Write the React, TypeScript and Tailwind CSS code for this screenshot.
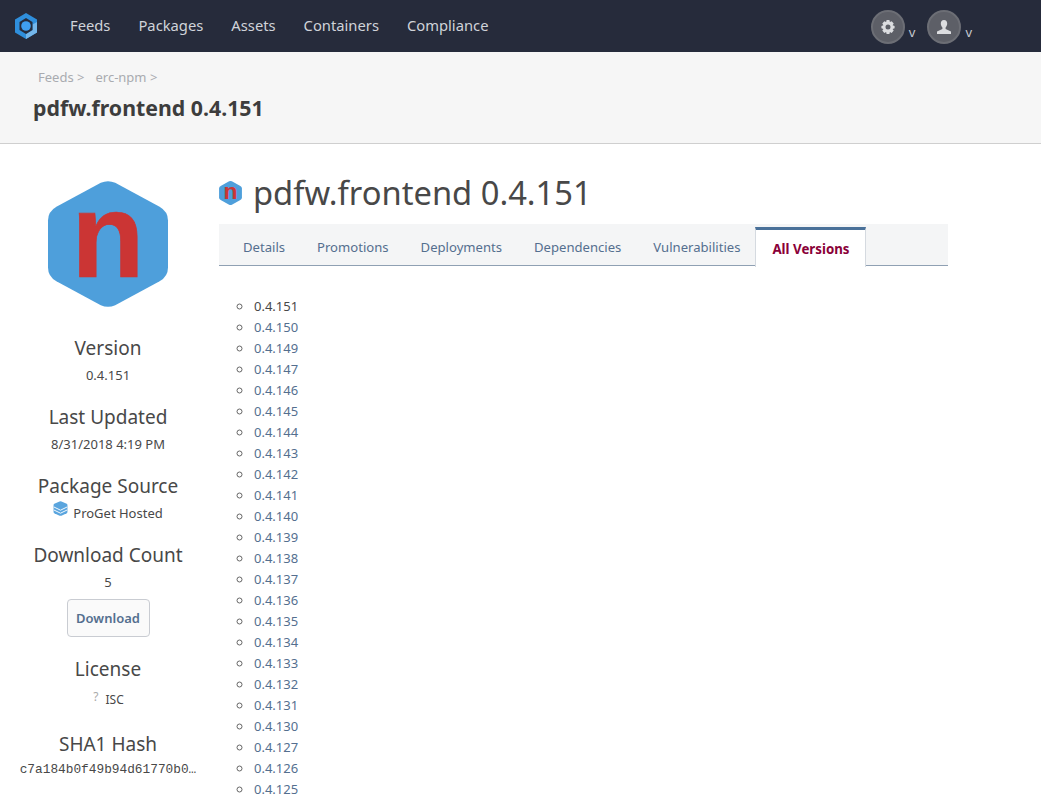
const navItems = ['Feeds', 'Packages', 'Assets', 'Containers', 'Compliance'];
const tabs = ['Details', 'Promotions', 'Deployments', 'Dependencies', 'Vulnerabilities'];
const versions = [
  '0.4.150', '0.4.149', '0.4.147', '0.4.146', '0.4.145', '0.4.144', '0.4.143', '0.4.142',
  '0.4.141', '0.4.140', '0.4.139', '0.4.138', '0.4.137', '0.4.136', '0.4.135', '0.4.134',
  '0.4.133', '0.4.132', '0.4.131', '0.4.130', '0.4.127', '0.4.126', '0.4.125',
];

function NpmHex({ className }: { className: string }) {
  return (
    <svg viewBox="0 0 100 105" className={`overflow-visible ${className}`}>
      <path d="M44 1.5 Q50 -1 56 1.5 L93 21.5 Q100 25.5 100 33 L100 72 Q100 79.5 93 83.5 L56 103.5 Q50 106 44 103.5 L7 83.5 Q0 79.5 0 72 L0 33 Q0 25.5 7 21.5 Z" fill="#4e9fdb" />
      <text x="50" y="80" textAnchor="middle" fontSize="100" fontWeight="700" fill="#cb3534" stroke="#cb3534" strokeWidth="0.6" fontFamily="'Liberation Sans', sans-serif">
        n
      </text>
    </svg>
  );
}

function AppLogo() {
  return (
    <svg viewBox="0 0 24 26" className="w-[24px] h-[26px]">
      <path d="M12 0 L23 6.5 V19.5 L12 26 L1 19.5 V6.5 Z" fill="#2f8fdc" />
      <path d="M23 9 V19.5 L12 26 V21 L18.5 17 V11.5 Z" fill="#74b6ea" />
      <path d="M12 5 L18.5 9 V17 L12 21 L5.5 17 V9 Z" fill="#262b3b" />
      <circle cx="12" cy="13" r="4.8" fill="#3f9ff0" />
    </svg>
  );
}

function GearIcon() {
  return (
    <svg viewBox="0 0 16 16" className="w-[16px] h-[16px]">
      <path
        fillRule="evenodd"
        d="M6.6 1 H9.4 L9.9 3 L11.7 2.2 L13.7 4.6 L12.6 6.2 L14.6 7 V9.2 L12.6 9.9 L13.7 11.6 L11.7 14 L9.9 13.1 L9.4 15 H6.6 L6.1 13.1 L4.3 14 L2.3 11.6 L3.4 9.9 L1.4 9.2 V7 L3.4 6.2 L2.3 4.6 L4.3 2.2 L6.1 3 Z M8 5.6 A2.5 2.5 0 1 0 8 10.6 A2.5 2.5 0 1 0 8 5.6 Z"
        fill="#dcdde0"
      />
    </svg>
  );
}

function UserIcon() {
  return (
    <svg viewBox="0 0 16 16" className="w-[16px] h-[16px]">
      <path d="M8 1 C10.2 1 11.2 2.6 11.2 4.6 C11.2 6.2 10.4 7.8 9.6 8.6 V10 L15 12.4 V15 H1 V12.4 L6.4 10 V8.6 C5.6 7.8 4.8 6.2 4.8 4.6 C4.8 2.6 5.8 1 8 1 Z" fill="#dcdde0" />
    </svg>
  );
}

function StackIcon() {
  return (
    <svg viewBox="0 0 16 16" className="w-[15px] h-[15px]">
      <path d="M7 0.4 Q8 0 9 0.4 L14.6 3 Q15.4 3.4 15.4 4.2 V11.8 Q15.4 12.6 14.6 13 L9 15.6 Q8 16 7 15.6 L1.4 13 Q0.6 12.6 0.6 11.8 V4.2 Q0.6 3.4 1.4 3 Z" fill="#5aa5de" />
      <path d="M1 6.4 L8 9.8 L15 6.4 M1 9.6 L8 13 L15 9.6" fill="none" stroke="#ffffff" strokeWidth="1" />
    </svg>
  );
}

function CircleButton({ children }: { children: React.ReactNode }) {
  return (
    <div className="flex items-end">
      <div className="w-[34px] h-[34px] rounded-full bg-[#5d5f67] border-2 border-[#6c6e75] flex items-center justify-center">
        {children}
      </div>
      <span className="ml-[4px] mb-[5px] text-[13px] leading-[14px] text-[#c5c8cf]">v</span>
    </div>
  );
}

function SideTitle({ children }: { children: React.ReactNode }) {
  return <div className="text-[19px] leading-[28px] text-[#484848] whitespace-nowrap">{children}</div>;
}

export default function App() {
  return (
    <div className="h-[798px] overflow-hidden bg-white text-[14px] text-[#484848] font-['Noto_Sans','Open_Sans',sans-serif]">
      <header className="h-[52px] bg-[#262b3b] flex items-center">
        <div className="ml-[14px] mr-[32px]">
          <AppLogo />
        </div>
        <nav className="flex gap-[28px] pb-[2px] text-[14.75px] text-[#d0d3d9]">
          {navItems.map((item) => (
            <span key={item}>{item}</span>
          ))}
        </nav>
        <div className="ml-auto mr-[69px] flex gap-[12px] pt-[2px]">
          <CircleButton>
            <GearIcon />
          </CircleButton>
          <CircleButton>
            <UserIcon />
          </CircleButton>
        </div>
      </header>

      <div className="h-[92px] bg-[#f6f6f6] border-b border-[#cfcfcf] pl-[33px] pt-[15px]">
        <div className="flex pl-[5px] text-[13px] leading-[20px] text-[#a9abb0]">
          <span className="mr-[11px]">Feeds &gt;</span>
          <span>erc-npm &gt;</span>
        </div>
        <div className="mt-[6px] text-[21.3px] leading-[30px] font-bold text-[#3d3d3d]">pdfw.frontend 0.4.151</div>
      </div>

      <div className="flex">
        <aside className="w-[219px] shrink-0 flex flex-col items-center pr-[3px] pt-[37px]">
          <NpmHex className="w-[120px] h-[126px]" />
          <div className="mt-[27px]">
            <SideTitle>Version</SideTitle>
          </div>
          <div className="mt-[3px] text-[13px] leading-[20px]">0.4.151</div>
          <div className="mt-[18px]">
            <SideTitle>Last Updated</SideTitle>
          </div>
          <div className="mt-[3px] text-[13px] leading-[20px]">8/31/2018 4:19 PM</div>
          <div className="mt-[18px]">
            <SideTitle>Package Source</SideTitle>
          </div>
          <div className="mt-[3px] flex items-start text-[13px] leading-[20px]">
            <span className="mr-[5px] mt-[-2px]">
              <StackIcon />
            </span>
            ProGet Hosted
          </div>
          <div className="mt-[18px]">
            <SideTitle>Download Count</SideTitle>
          </div>
          <div className="mt-[3px] text-[13px] leading-[20px]">5</div>
          <button className="mt-[7px] w-[83px] h-[38px] rounded-[4px] border border-[#c9ccd2] bg-[#fafafa] pt-[1px] text-[13px] font-semibold text-[#546f8f]">
            Download
          </button>
          <div className="mt-[18px]">
            <SideTitle>License</SideTitle>
          </div>
          <div className="mt-[7px] flex text-[12px] leading-[20px]">
            <span className="ml-[1px] mr-[7px] mt-[-3px] text-[#aaaaaa]">?</span>
            ISC
          </div>
          <div className="mt-[20px]">
            <SideTitle>SHA1 Hash</SideTitle>
          </div>
          <div className="mt-[2px] whitespace-nowrap font-['Liberation_Mono',monospace] text-[12.8px] leading-[20px]">
            c7a184b0f49b94d61770b0…
          </div>
        </aside>

        <main className="w-[729px] pt-[26px]">
          <div className="flex items-center h-[46px]">
            <NpmHex className="w-[23px] h-[24px]" />
            <h1 className="ml-[11px] text-[32.7px] leading-[46px] text-[#484848]">pdfw.frontend 0.4.151</h1>
          </div>
          <div className="mt-[8px] h-[42px] bg-[#f4f5f6] border-b border-[#8fa0b3] flex items-stretch pl-[8px] text-[13.1px] text-[#546f8f]">
            {tabs.map((tab) => (
              <div key={tab} className="px-[16px] pt-[14px]">
                {tab}
              </div>
            ))}
            <div className="ml-[-1px] mt-[3px] h-[40px] w-[111px] bg-white border-t-[3px] border-x border-t-[#4a7199] border-x-[#d5dae0] text-center pt-[10px] text-[13.3px] font-bold text-[#8a0038]">
              All Versions
            </div>
          </div>
          <ul className="mt-[29px] pl-[35px] list-[circle] marker:text-[#666666] marker:text-[15px] text-[13px] leading-[21px]">
            <li className="h-[21px]">0.4.151</li>
            {versions.map((v) => (
              <li key={v} className="h-[21px] text-[#546f8f]">
                {v}
              </li>
            ))}
          </ul>
        </main>
      </div>
    </div>
  );
}
